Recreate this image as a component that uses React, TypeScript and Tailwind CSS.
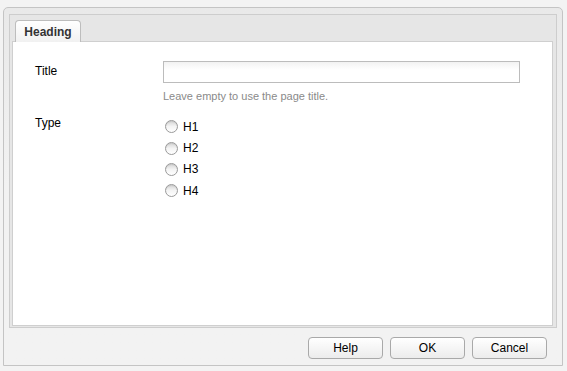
import React from 'react';

const labels = ['H1', 'H2', 'H3', 'H4'];

function Radio({ label }: { label: string }) {
    return (
        <label className="flex items-center h-[21.4px] gap-[5px]">
            <span className="w-[13px] h-[13px] rounded-full border border-[#9a9a9a] bg-gradient-to-b from-[#d6d6d6] via-[#f4f4f4] to-white shadow-[inset_0_1px_1px_rgba(0,0,0,0.08)]" />
            <span className="text-[12px] text-black">{label}</span>
        </label>
    );
}

function Button({ children }: { children: React.ReactNode }) {
    return (
        <button className="w-[75px] h-[22px] rounded-[4px] border border-[#a9a9a9] bg-gradient-to-b from-white to-[#ececec] text-[12px] text-black">
            {children}
        </button>
    );
}

export default function App() {
    return (
        <div
            className="w-[567px] h-[371px] bg-[#f3f3f3] pt-[7px] pl-[3px]"
            style={{ fontFamily: '"Liberation Sans", Arial, sans-serif' }}
        >
            <div className="w-[560px] h-[359px] border border-[#c4c4c4] rounded-t-[5px] bg-gradient-to-b from-[#e9e9e9] via-[#f2f2f2] to-[#f2f2f2] px-[5px] pt-[6px] flex flex-col">
                {/* Tab frame */}
                <div className="h-[314px] border border-[#cdcdcd] bg-[#e6e6e6] flex flex-col pl-[2px] pr-[3px] pb-[1px]">
                    <div className="flex pl-[3px] pt-[5px]">
                        <div className="h-[22px] w-[66px] rounded-t-[4px] border border-b-0 border-[#bdbdbd] bg-gradient-to-b from-white to-[#f1f1f1] flex items-center justify-center text-[12px] font-bold text-[#333] -mb-px relative">
                            Heading
                        </div>
                    </div>
                    {/* Content */}
                    <div className="flex-1 border border-[#cfcfcf] bg-white pl-[22px] pt-[18px]">
                        <div className="grid grid-cols-[128px_357px]">
                            <div className="text-[12px] leading-[22px] text-black">Title</div>
                            <div>
                                <input
                                    type="text"
                                    className="w-[357px] h-[22px] border border-[#bcbcbc] bg-gradient-to-b from-[#f2f2f2] to-white to-40% outline-none"
                                />
                                <div className="mt-[4px] text-[11px] leading-[16px] text-[#8a8a8a]">
                                    Leave empty to use the page title.
                                </div>
                            </div>
                            <div className="mt-[11px] text-[12px] leading-[16px] text-black">Type</div>
                            <div className="mt-[12px] flex flex-col pl-[2px]">
                                {labels.map((l) => (
                                    <Radio key={l} label={l} />
                                ))}
                            </div>
                        </div>
                    </div>
                </div>
                {/* Buttons */}
                <div className="mt-[9px] flex justify-end gap-[7px] pr-[10px]">
                    <Button>Help</Button>
                    <Button>OK</Button>
                    <Button>Cancel</Button>
                </div>
            </div>
        </div>
    );
}
